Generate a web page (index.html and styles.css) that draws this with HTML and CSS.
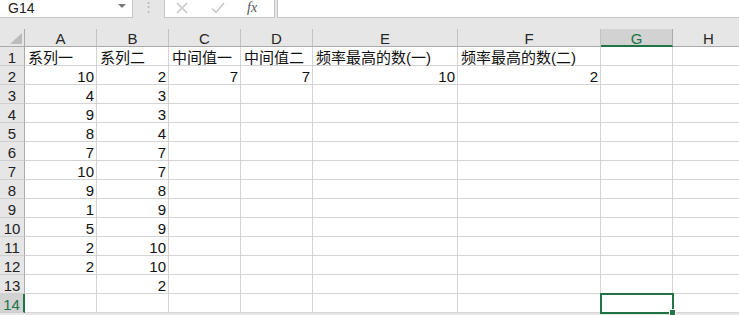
FILE: index.html
```html
<!DOCTYPE html>
<html>
	<head>
		<meta charset="utf-8" />
		<title>Sheet1</title>
		<link rel="stylesheet" href="styles.css">
	</head>
	<body>
		<div class="fbar">
			<div class="namebox"><span>G14</span><i class="caret"></i></div>
			<div class="grip">⋮</div>
			<div class="btns">
				<svg class="x" width="12" height="12" viewBox="0 0 12 12"><path d="M1 1L11 11M11 1L1 11" stroke="#c4c4c4" stroke-width="1.4" fill="none"/></svg>
				<svg class="ok" width="14" height="12" viewBox="0 0 14 12"><path d="M1 6.5L5 10.5L13 1" stroke="#c4c4c4" stroke-width="1.5" fill="none"/></svg>
				<span class="fx">fx</span>
			</div>
			<div class="input"></div>
		</div>

		<div class="sheet">
			<!-- 列标题 -->
			<div class="corner"><i></i></div>
			<div class="ch">A</div><div class="ch">B</div><div class="ch">C</div><div class="ch">D</div>
			<div class="ch">E</div><div class="ch">F</div><div class="ch on">G</div><div class="ch">H</div>

			<div class="rh">1</div>
			<div class="c">系列一</div><div class="c">系列二</div><div class="c">中间值一</div><div class="c">中间值二</div>
			<div class="c">频率最高的数(一)</div><div class="c">频率最高的数(二)</div><div class="c"></div><div class="c"></div>

			<div class="rh">2</div>
			<div class="c n">10</div><div class="c n">2</div><div class="c n">7</div><div class="c n">7</div>
			<div class="c n">10</div><div class="c n">2</div><div class="c"></div><div class="c"></div>

			<div class="rh">3</div>
			<div class="c n">4</div><div class="c n">3</div><div class="c"></div><div class="c"></div>
			<div class="c"></div><div class="c"></div><div class="c"></div><div class="c"></div>

			<div class="rh">4</div>
			<div class="c n">9</div><div class="c n">3</div><div class="c"></div><div class="c"></div>
			<div class="c"></div><div class="c"></div><div class="c"></div><div class="c"></div>

			<div class="rh">5</div>
			<div class="c n">8</div><div class="c n">4</div><div class="c"></div><div class="c"></div>
			<div class="c"></div><div class="c"></div><div class="c"></div><div class="c"></div>

			<div class="rh">6</div>
			<div class="c n">7</div><div class="c n">7</div><div class="c"></div><div class="c"></div>
			<div class="c"></div><div class="c"></div><div class="c"></div><div class="c"></div>

			<div class="rh">7</div>
			<div class="c n">10</div><div class="c n">7</div><div class="c"></div><div class="c"></div>
			<div class="c"></div><div class="c"></div><div class="c"></div><div class="c"></div>

			<div class="rh">8</div>
			<div class="c n">9</div><div class="c n">8</div><div class="c"></div><div class="c"></div>
			<div class="c"></div><div class="c"></div><div class="c"></div><div class="c"></div>

			<div class="rh">9</div>
			<div class="c n">1</div><div class="c n">9</div><div class="c"></div><div class="c"></div>
			<div class="c"></div><div class="c"></div><div class="c"></div><div class="c"></div>

			<div class="rh">10</div>
			<div class="c n">5</div><div class="c n">9</div><div class="c"></div><div class="c"></div>
			<div class="c"></div><div class="c"></div><div class="c"></div><div class="c"></div>

			<div class="rh">11</div>
			<div class="c n">2</div><div class="c n">10</div><div class="c"></div><div class="c"></div>
			<div class="c"></div><div class="c"></div><div class="c"></div><div class="c"></div>

			<div class="rh">12</div>
			<div class="c n">2</div><div class="c n">10</div><div class="c"></div><div class="c"></div>
			<div class="c"></div><div class="c"></div><div class="c"></div><div class="c"></div>

			<div class="rh">13</div>
			<div class="c"></div><div class="c n">2</div><div class="c"></div><div class="c"></div>
			<div class="c"></div><div class="c"></div><div class="c"></div><div class="c"></div>

			<div class="rh on">14</div>
			<div class="c"></div><div class="c"></div><div class="c"></div><div class="c"></div>
			<div class="c"></div><div class="c"></div><div class="c sel"></div><div class="c"></div>
		</div>
	</body>
</html>
```

FILE: styles.css
```css
body{margin: 0;background: #e6e6e6;font-family: "Liberation Sans","Noto Sans CJK SC",sans-serif;font-size: 15px;color: #111;overflow: hidden;width: 739px;height: 315px;}

/* 编辑栏 */
.fbar{display: flex;height: 18px;margin-bottom: 11px;}
.namebox{width: 133px;box-sizing: border-box;background: #fff;border-right: 1px solid #c6c6c6;border-bottom: 1px solid #c6c6c6;display: flex;align-items: center;justify-content: space-between;padding: 0 6px 1px 8px;font-size: 14px;color: #222;}
.caret{width: 0;height: 0;border-left: 4px solid transparent;border-right: 4px solid transparent;border-top: 4px solid #777;margin-bottom: 4px;}
.grip{width: 31px;text-align: center;color: #b4b4b4;font-size: 13px;line-height: 14px;}
.btns{width: 111px;box-sizing: border-box;background: #fff;border-left: 1px solid #c6c6c6;border-right: 1px solid #c6c6c6;border-bottom: 1px solid #c6c6c6;display: flex;align-items: center;padding: 0 0 2px 11px;}
.btns .x{margin-right: 23px;}
.btns .ok{margin-right: 22px;}
.btns .fx{color: #555;font-family: "Liberation Serif",serif;font-style: italic;font-size: 14px;}
.input{flex: 1;margin-left: 2px;background: #fff;border-left: 1px solid #c6c6c6;border-bottom: 1px solid #c6c6c6;}

/* 表格 */
.sheet{display: grid;grid-template-columns: 25px 72px 72px 72px 72px 145px 143px 72px 72px;grid-template-rows: 18px repeat(14,19px);background: #fff;}
.sheet div{box-sizing: border-box;white-space: nowrap;}
.corner{background: #e6e6e6;border-right: 1px solid #ababab;border-bottom: 1px solid #ababab;position: relative;}
.corner i{position: absolute;right: 2px;bottom: 2px;width: 0;height: 0;border-left: 12px solid transparent;border-bottom: 11px solid #bcbcbc;}
.ch{background: #e6e6e6;border-bottom: 1px solid #ababab;border-right: 1px solid #c2c2c2;text-align: center;line-height: 18px;padding-top: 1px;color: #262626;}
.ch.on{background: #d2d2d2;color: #217346;border-bottom: 2px solid #217346;border-right-color: #ababab;}
.rh{background: #e6e6e6;border-right: 1px solid #ababab;border-bottom: 1px solid #cfcfcf;text-align: center;line-height: 18px;padding-top: 2px;color: #222;}
.rh.on{background: #d2d2d2;color: #217346;border-right: 2px solid #217346;}
.c{border-right: 1px solid #d4d4d4;border-bottom: 1px solid #d4d4d4;line-height: 18px;padding: 2px 2px 0 3px;}
.c.n{text-align: right;padding-right: 2px;}
.c.sel{outline: 2px solid #217346;outline-offset: -1px;position: relative;}
.c.sel::after{content: "";position: absolute;right: -4px;bottom: -4px;width: 5px;height: 5px;background: #217346;border: 1px solid #fff;}
```
